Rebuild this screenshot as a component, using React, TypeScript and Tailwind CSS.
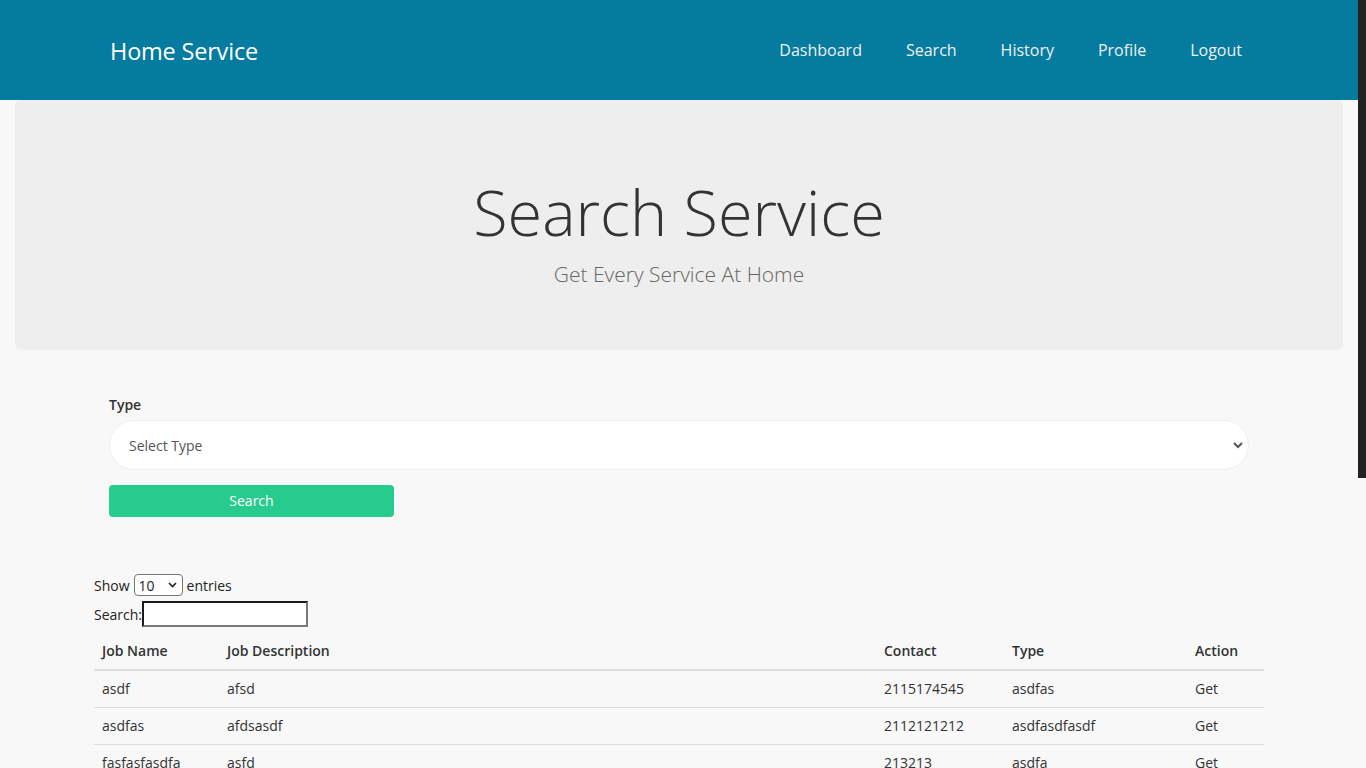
import React from 'react';

const rows = [
  { name: 'asdf', desc: 'afsd', contact: '2115174545', type: 'asdfas' },
  { name: 'asdfas', desc: 'afdsasdf', contact: '2112121212', type: 'asdfasdfasdf' },
  { name: 'fasfasfasdfa', desc: 'asfd', contact: '213213', type: 'asdfa' },
  { name: 'plumber', desc: 'fix kitchen sink', contact: '9876543210', type: 'Plumbing' },
  { name: 'electric', desc: 'wiring check', contact: '9123456780', type: 'Electrician' },
  { name: 'clean', desc: 'full house cleaning', contact: '9988776655', type: 'Cleaning' },
  { name: 'paint', desc: 'wall painting', contact: '9090909090', type: 'Painting' },
  { name: 'ac', desc: 'ac service', contact: '9812345678', type: 'Repair' },
];

const navLinks = ['Dashboard', 'Search', 'History', 'Profile', 'Logout'];

export default function App() {
  return (
    <div className="flex bg-[#f8f8f8] text-[#333] font-['Open_Sans',sans-serif]">
      <div className="min-w-0 flex-1">
        {/* navbar */}
        <nav className="h-[100px] bg-[#057b9f]">
          <div className="mx-auto flex h-full w-[1140px] items-center justify-between">
            <a href="#" className="mt-[3px] pl-px text-[23.5px] text-white tracking-[-0.2px]">Home Service</a>
            <ul className="mr-[7px] flex items-center gap-[44px]">
              {navLinks.map((l) => (
                <li key={l}>
                  <a href="#" className="text-[16px] text-[#f0f0f0]">{l}</a>
                </li>
              ))}
            </ul>
          </div>
        </nav>

        {/* jumbotron */}
        <div className="mx-[15px] flex h-[250px] flex-col items-center rounded-md bg-[#eeeeee] pt-[74px]">
          <h1 className="text-[63px] font-light leading-[1.2] text-[#333]">Search Service</h1>
          <p className="mt-[9px] text-[21px] font-light leading-[1.5] text-[#666]">Get Every Service At Home</p>
        </div>

        {/* search form */}
        <div className="mx-auto w-[1140px] pt-[44px]">
          <label className="block text-[14px] font-semibold leading-[21px] text-[#333]">Type</label>
          <div className="relative mt-[5px]">
            <select className="h-[50px] w-full appearance-none rounded-full border border-[#eeeeee] bg-white pl-[19px] text-[14px] text-[#555] outline-none">
              <option>Select Type</option>
            </select>
            <svg className="pointer-events-none absolute right-[5px] top-1/2 -translate-y-1/2" width="12" height="8" viewBox="0 0 12 8">
              <path d="M2 2l4 4 4-4" fill="none" stroke="#555" strokeWidth="2" />
            </svg>
          </div>
          <button className="mt-[15px] h-[32px] w-[285px] rounded bg-[#28cb8e] pb-px text-[14px] text-white">Search</button>
        </div>

        {/* table */}
        <div className="mx-auto w-[1170px] pt-[57px] pb-[140px] text-[14px] text-[#222]">
          <div className="flex h-[22px] items-center">
            <span>Show</span>
            <div className="relative mx-[4px]">
              <select className="h-[22px] w-[49px] appearance-none rounded-sm border border-[#767676] bg-white pl-[4px] text-[14px] text-[#222] outline-none">
                <option>10</option>
                <option>25</option>
                <option>50</option>
              </select>
              <svg className="pointer-events-none absolute right-[6px] top-[8px]" width="9" height="6" viewBox="0 0 9 6">
                <path d="M1 1l3.5 3.5L8 1" fill="none" stroke="#222" strokeWidth="1.6" />
              </svg>
            </div>
            <span>entries</span>
          </div>
          <div className="mt-[5px] flex h-[26px] items-center">
            <span>Search:</span>
            <input className="h-[26px] w-[166px] border-2 border-t-[#1a1a1a] border-l-[#1a1a1a] border-r-[#777] border-b-[#777] bg-white outline-none" />
          </div>

          <table className="mt-[5px] w-full table-fixed border-collapse text-left text-[#333]">
            <colgroup>
              <col className="w-[125px]" />
              <col className="w-[657px]" />
              <col className="w-[128px]" />
              <col className="w-[183px]" />
              <col className="w-[77px]" />
            </colgroup>
            <thead>
              <tr className="border-b-2 border-[#dddddd]">
                <th className="px-[8px] py-[8px] font-semibold leading-[21px]">Job Name</th>
                <th className="px-[8px] py-[8px] font-semibold leading-[21px]">Job Description</th>
                <th className="px-[8px] py-[8px] font-semibold leading-[21px]">Contact</th>
                <th className="px-[8px] py-[8px] font-semibold leading-[21px]">Type</th>
                <th className="px-[8px] py-[8px] font-semibold leading-[21px]">Action</th>
              </tr>
            </thead>
            <tbody>
              {rows.map((r, i) => (
                <tr key={i} className="border-b border-[#dddddd]">
                  <td className="px-[8px] py-[8px] leading-[20px]">{r.name}</td>
                  <td className="px-[8px] py-[8px] leading-[20px]">{r.desc}</td>
                  <td className="px-[8px] py-[8px] leading-[20px]">{r.contact}</td>
                  <td className="px-[8px] py-[8px] leading-[20px]">{r.type}</td>
                  <td className="px-[8px] py-[8px] leading-[20px]">
                    <a href="#">Get</a>
                  </td>
                </tr>
              ))}
            </tbody>
          </table>

          <div className="mt-[10px] flex items-center justify-between">
            <span>Showing 1 to 8 of 8 entries</span>
            <div className="flex items-center gap-[10px]">
              <span className="text-[#999]">Previous</span>
              <span className="border border-[#ccc] bg-white px-[10px] py-[2px]">1</span>
              <span className="text-[#999]">Next</span>
            </div>
          </div>
        </div>
      </div>

      {/* page scrollbar */}
      <div className="w-2 shrink-0 bg-[#f8f8f8]">
        <div className="sticky top-0 h-[478px] bg-[#222]" />
      </div>
    </div>
  );
}
